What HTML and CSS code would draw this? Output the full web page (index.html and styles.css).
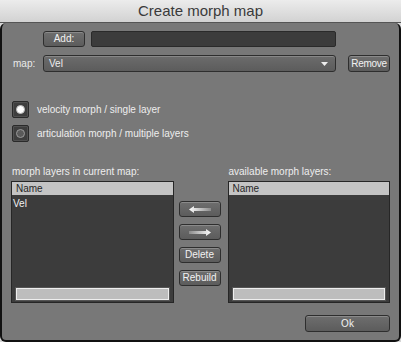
FILE: index.html
```html
<!DOCTYPE html>
<html lang="en">
<head>
    <meta charset="UTF-8">
    <meta name="viewport" content="width=device-width, initial-scale=1.0">
    <title>Create morph map</title>
    <link rel="stylesheet" href="styles.css">
</head>
<body>
    <div class="window">
        <div class="titlebar">Create morph map</div>
        <div class="panel">
            <div class="add-row">
                <button class="btn add-btn">Add:</button>
                <div class="field"></div>
            </div>
            <div class="map-row">
                <span class="map-label">map:</span>
                <div class="select">
                    <span>Vel</span>
                    <svg class="caret" width="7" height="4" viewBox="0 0 7 4"><path d="M0 0H7L3.5 4Z" fill="#eee"/></svg>
                </div>
                <button class="btn remove-btn">Remove</button>
            </div>

            <div class="radio-row first">
                <span class="radio checked"><span class="dot"></span></span>
                <span>velocity morph / single layer</span>
            </div>
            <div class="radio-row">
                <span class="radio"><span class="dot"></span></span>
                <span>articulation morph / multiple layers</span>
            </div>

            <div class="lists">
                <div class="list-col">
                    <div class="list-title">morph layers in current map:</div>
                    <div class="list">
                        <div class="list-head">Name</div>
                        <div class="list-body">
                            <div class="list-item">Vel</div>
                        </div>
                        <div class="scroll"></div>
                    </div>
                </div>
                <div class="mid-col">
                    <button class="btn mid-btn">
                        <svg width="22" height="7" viewBox="0 0 22 7">
                            <defs>
                                <linearGradient id="fadeL" x1="0" x2="1">
                                    <stop offset="0" stop-color="#ffffff"/>
                                    <stop offset="1" stop-color="#8a8a8a"/>
                                </linearGradient>
                            </defs>
                            <path d="M0 3.5L5 0V2H22V5H5V7Z" fill="url(#fadeL)"/>
                        </svg>
                    </button>
                    <button class="btn mid-btn">
                        <svg width="22" height="7" viewBox="0 0 22 7">
                            <defs>
                                <linearGradient id="fadeR" x1="0" x2="1">
                                    <stop offset="0" stop-color="#8a8a8a"/>
                                    <stop offset="1" stop-color="#ffffff"/>
                                </linearGradient>
                            </defs>
                            <path d="M22 3.5L17 0V2H0V5H17V7Z" fill="url(#fadeR)"/>
                        </svg>
                    </button>
                    <button class="btn mid-btn">Delete</button>
                    <button class="btn mid-btn">Rebuild</button>
                </div>
                <div class="list-col">
                    <div class="list-title">available morph layers:</div>
                    <div class="list">
                        <div class="list-head">Name</div>
                        <div class="list-body"></div>
                        <div class="scroll"></div>
                    </div>
                </div>
            </div>

            <div class="footer">
                <button class="btn ok-btn">Ok</button>
            </div>
        </div>
    </div>
</body>
</html>
```

FILE: styles.css
```css
body {
    margin: 0;
    padding: 0;
    background: #7a7a7a;
    font-family: "Liberation Sans", Arial, sans-serif;
    font-size: 10px;
    color: #eeeeee;
}
.window {
    width: 401px;
    height: 342px;
    display: flex;
    flex-direction: column;
    background: #d6d6d6;
}
.titlebar {
    height: 22px;
    line-height: 22px;
    text-align: center;
    font-family: "Liberation Sans", Arial, sans-serif;
    font-size: 15px;
    color: #3a3a3a;
    background: linear-gradient(#ececec, #d2d2d2);
    border-bottom: 1px solid #555;
}
.panel {
    flex: 1;
    background: #787878;
    border-left: 2px solid #111;
    border-right: 2px solid #111;
    border-bottom: 2px solid #111;
    border-radius: 6px;
    padding: 8px 9px 0 9px;
}
.btn {
    font-family: "Liberation Sans", Arial, sans-serif;
    font-size: 10px;
    color: #f2f2f2;
    background: linear-gradient(#6e6e6e, #5c5c5c);
    border: 1px solid #2e2e2e;
    border-radius: 3px;
    box-shadow: inset 0 1px 0 #8a8a8a;
    padding: 0;
    height: 16px;
    line-height: 14px;
}
.add-row {
    display: flex;
    gap: 6px;
    padding-left: 32px;
}
.add-btn {
    width: 42px;
}
.field {
    width: 245px;
    height: 16px;
    box-sizing: border-box;
    background: #3c3c3c;
    border: 1px solid #2a2a2a;
    border-radius: 2px;
}
.map-row {
    display: flex;
    align-items: center;
    margin-top: 8px;
}
.map-label {
    width: 32px;
    padding-left: 2px;
    box-sizing: border-box;
    color: #eaeaea;
}
.select {
    width: 293px;
    height: 17px;
    box-sizing: border-box;
    display: flex;
    align-items: center;
    justify-content: space-between;
    padding: 0 7px 0 5px;
    background: linear-gradient(#6c6c6c, #5c5c5c);
    border: 1px solid #2e2e2e;
    border-radius: 3px;
    box-shadow: inset 0 1px 0 #888;
}
.remove-btn {
    width: 42px;
    height: 17px;
    margin-left: 12px;
    letter-spacing: -0.3px;
}
.radio-row {
    display: flex;
    align-items: center;
    gap: 8px;
    margin-top: 7px;
    padding-left: 1px;
}
.radio-row.first {
    margin-top: 29px;
}
.radio {
    width: 17px;
    height: 17px;
    box-sizing: border-box;
    display: flex;
    align-items: center;
    justify-content: center;
    background: #3e3e3e;
    border: 1px solid #2a2a2a;
    border-radius: 2px;
    box-shadow: inset 0 0 0 1px #505050;
}
.dot {
    width: 7px;
    height: 7px;
    border-radius: 50%;
    background: #5a5a5a;
    border: 1px solid #9a9a9a;
}
.radio.checked .dot {
    background: #ffffff;
    border-color: #bbbbbb;
}
.lists {
    display: flex;
    margin-top: 24px;
}
.list-col {
    width: 163px;
}
.list-title {
    padding-left: 1px;
    height: 15px;
}
.list {
    height: 122px;
    box-sizing: border-box;
    display: flex;
    flex-direction: column;
    background: #3c3c3c;
    border: 1px solid #262626;
}
.list-head {
    height: 13px;
    line-height: 13px;
    background: #c4c4c4;
    color: #262626;
    padding-left: 4px;
}
.list-body {
    flex: 1;
    padding-top: 3px;
}
.list-item {
    padding-left: 1px;
    color: #f2f2f2;
}
.scroll {
    height: 10px;
    margin: 0 4px 2px 4px;
    background: #bdbdbd;
    border: 1px solid #eeeeee;
    outline: 1px solid #555;
}
.mid-col {
    width: 42px;
    margin: 35px 7px 0 5px;
    display: flex;
    flex-direction: column;
    gap: 7px;
}
.mid-btn {
    width: 42px;
    display: flex;
    align-items: center;
    justify-content: center;
}
.footer {
    display: flex;
    justify-content: flex-end;
    margin-top: 12px;
}
.ok-btn {
    width: 85px;
    height: 17px;
}
```
